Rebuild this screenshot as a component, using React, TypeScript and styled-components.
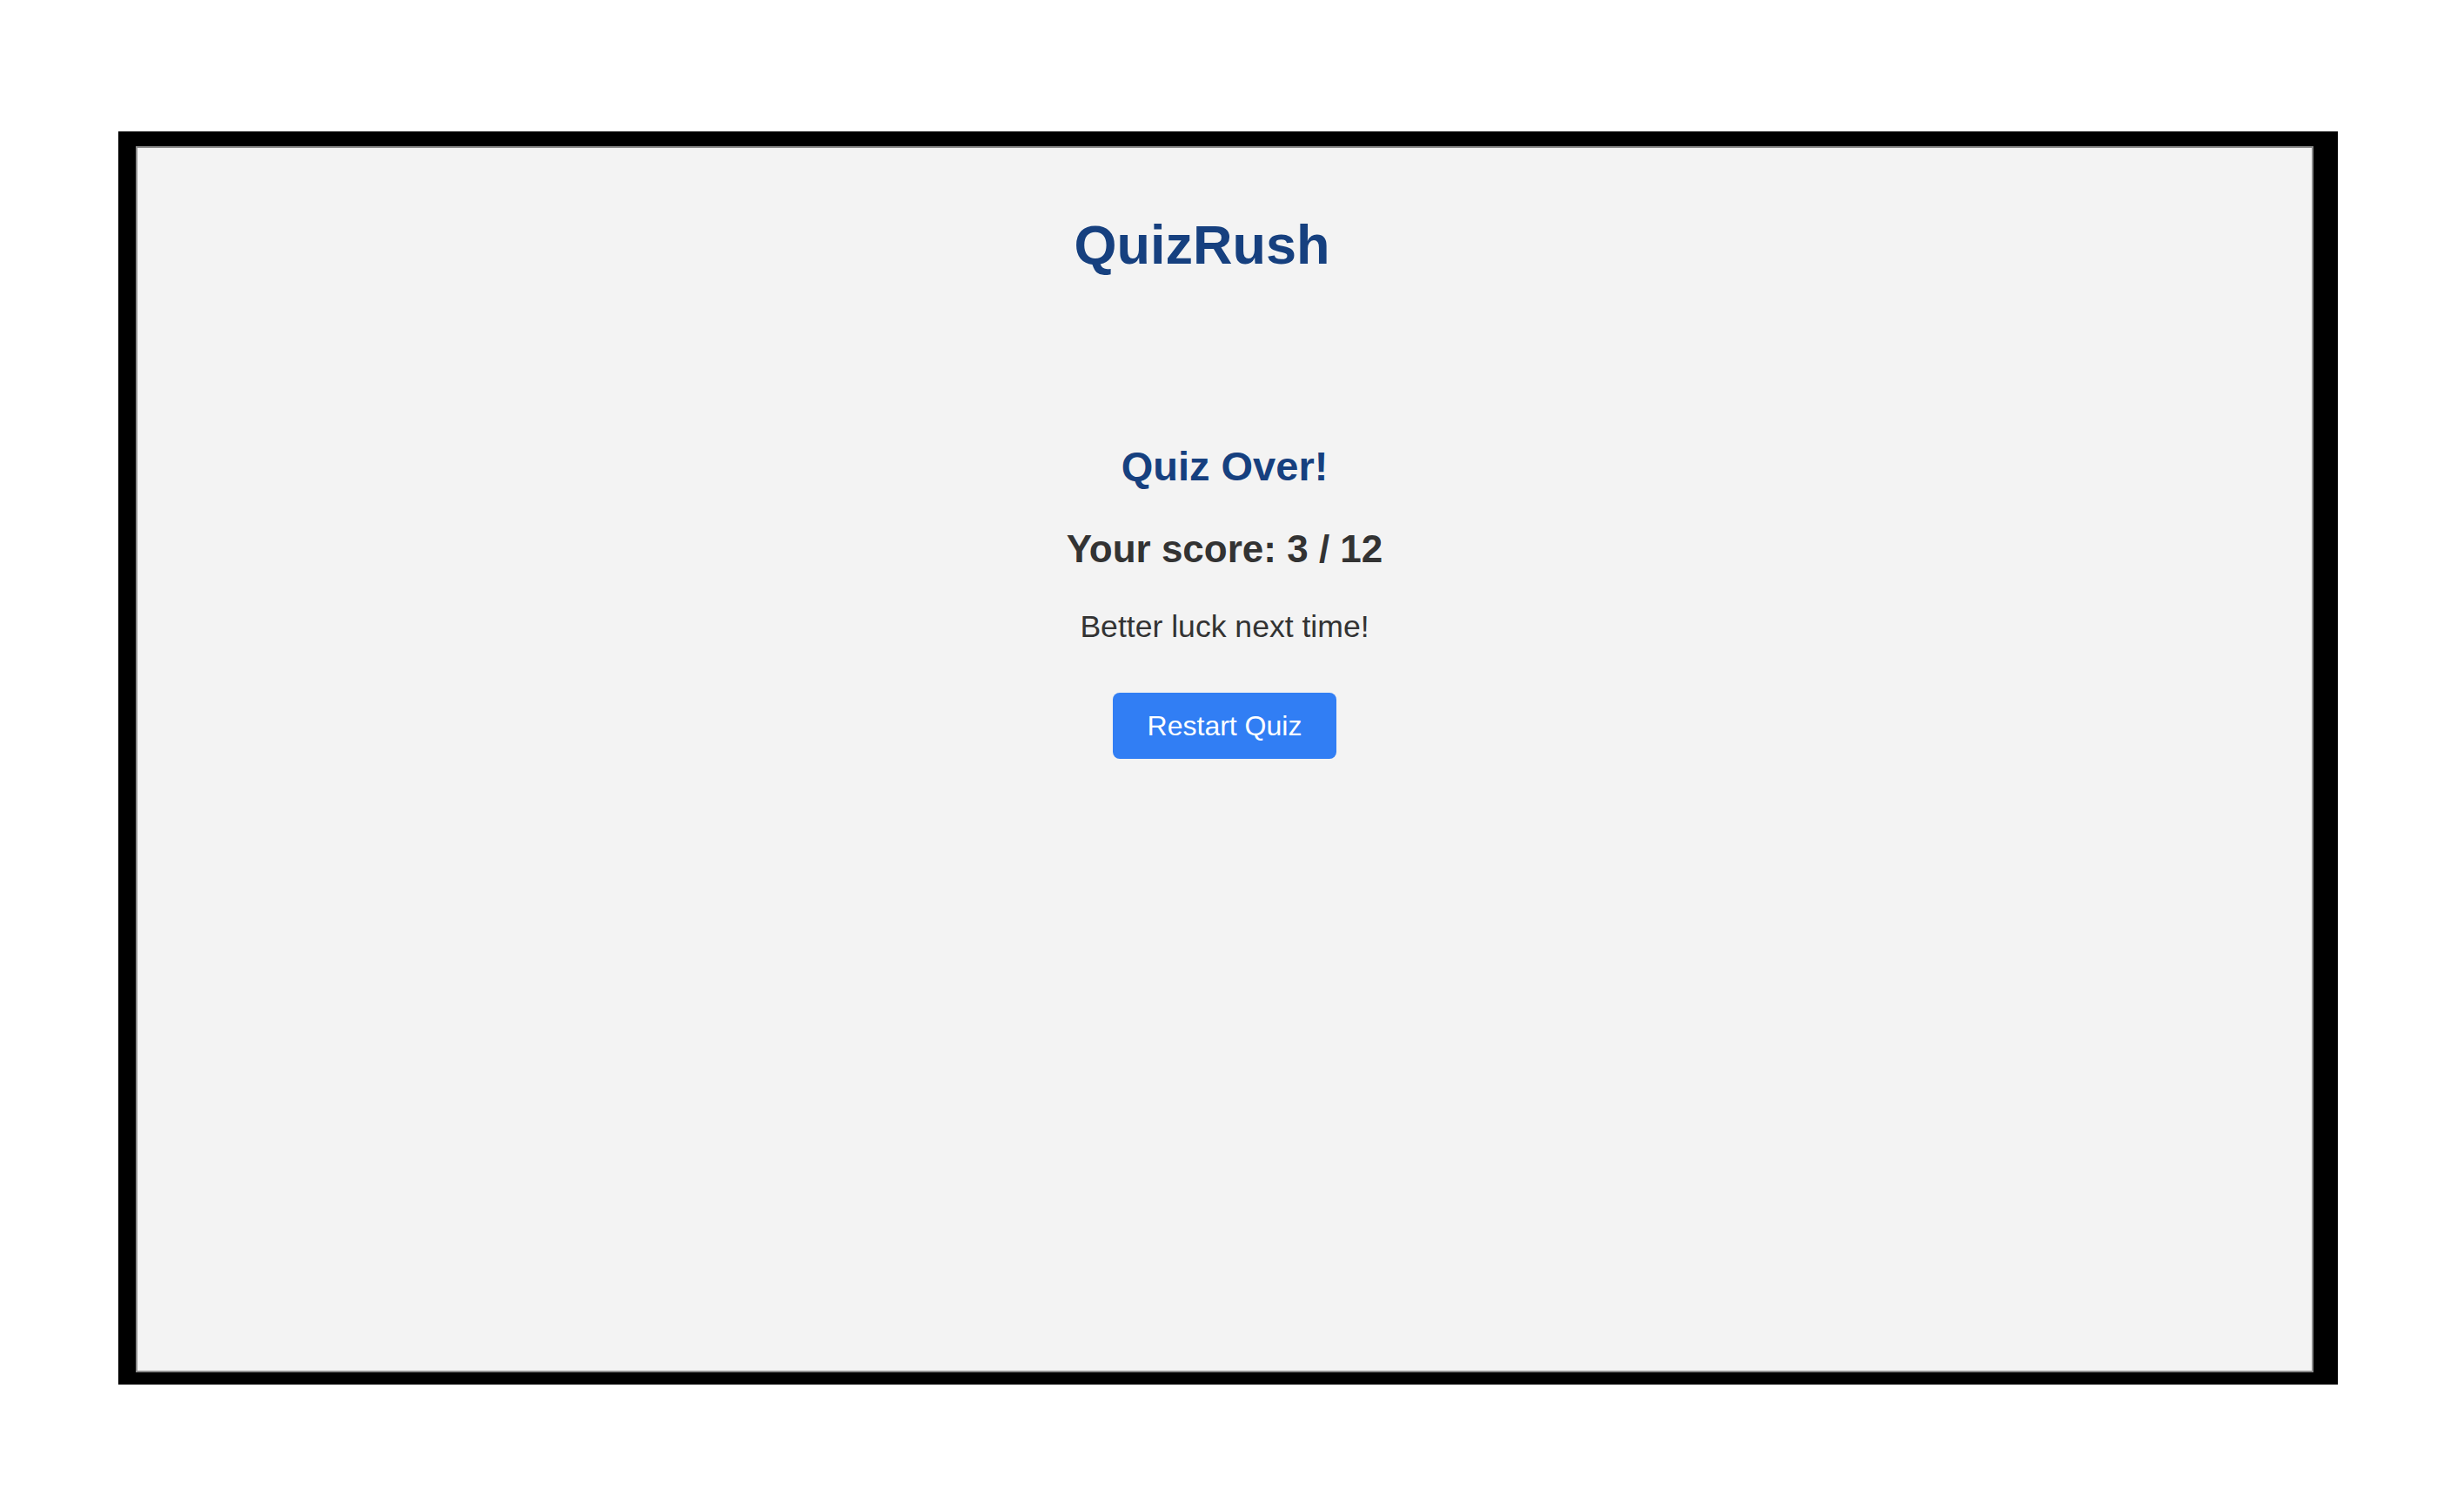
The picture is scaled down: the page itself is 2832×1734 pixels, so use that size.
import React from "react";
import styled, { createGlobalStyle } from "styled-components";

const GlobalStyle = createGlobalStyle`
  html, body {
    margin: 0;
    padding: 0;
    background: #ffffff;
    font-family: "Liberation Sans", Arial, sans-serif;
  }
  * { box-sizing: border-box; }
`;

const Frame = styled.div`
  margin: 151px 145px 0 136px;
  height: 1440px;
  background: #000000;
  border-style: solid;
  border-color: #000000;
  border-width: 17px 28px 14px 20px;
  display: flex;
`;

const Panel = styled.main`
  flex: 1;
  background: #f3f3f3;
  border: 2px solid #8c8c8c;
  display: flex;
  flex-direction: column;
  align-items: center;
  padding-top: 75px;
`;

const Header = styled.header`
  display: flex;
  justify-content: center;
  padding-right: 52px;
`;

const Title = styled.h1`
  margin: 0;
  font-size: 63px;
  line-height: 1.15;
  font-weight: 700;
  color: #16407f;
`;

const Result = styled.section`
  margin-top: 192px;
  display: flex;
  flex-direction: column;
  align-items: center;
`;

const Heading = styled.h2`
  margin: 0;
  font-size: 47px;
  line-height: 1.15;
  font-weight: 700;
  color: #16407f;
`;

const Score = styled.p`
  margin: 43px 0 0;
  font-size: 44px;
  line-height: 1.15;
  font-weight: 700;
  color: #333333;
`;

const Message = styled.p`
  margin: 43px 0 0;
  font-size: 35.6px;
  line-height: 1.15;
  font-weight: 400;
  color: #333333;
`;

const Button = styled.button`
  margin-top: 55px;
  height: 76px;
  padding: 0 40px;
  border: none;
  border-radius: 8px;
  background: #317ef4;
  color: #ffffff;
  font-family: "Liberation Sans", Arial, sans-serif;
  font-size: 32px;
  line-height: 1.15;
  cursor: pointer;
`;

export default function App() {
  return (
    <>
      <GlobalStyle />
      <Frame>
        <Panel>
          <Header>
            <Title>QuizRush</Title>
          </Header>
          <Result>
            <Heading>Quiz Over!</Heading>
            <Score>Your score: 3 / 12</Score>
            <Message>Better luck next time!</Message>
            <Button type="button">Restart Quiz</Button>
          </Result>
        </Panel>
      </Frame>
    </>
  );
}
